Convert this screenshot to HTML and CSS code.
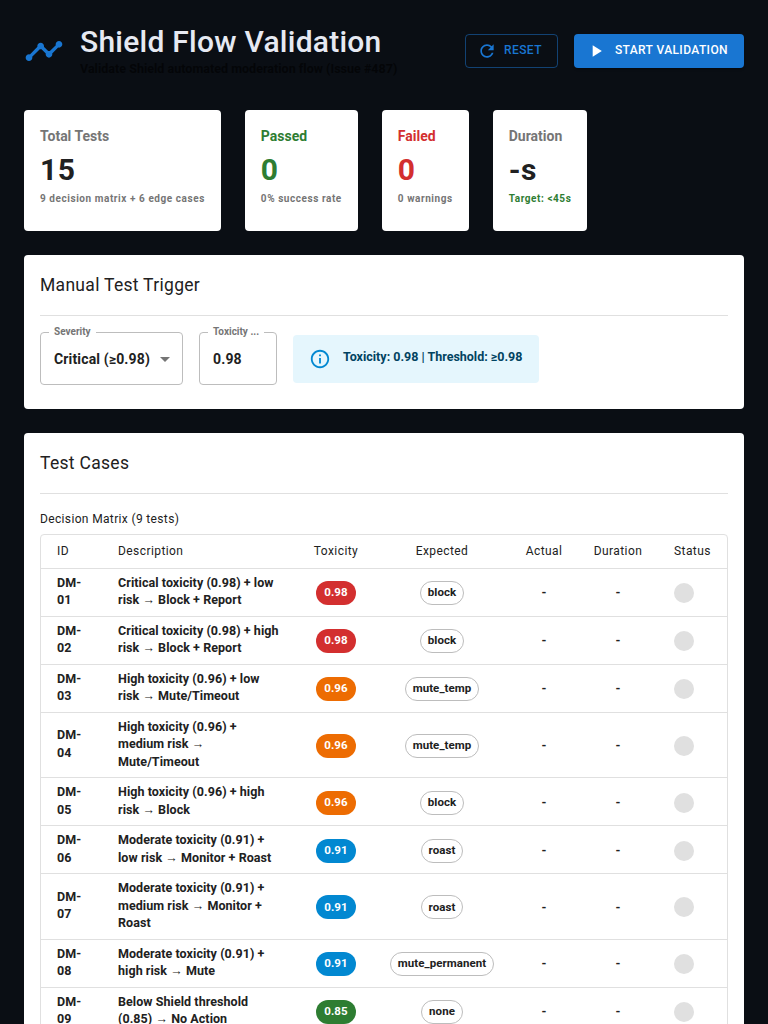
FILE: index.html
```html
<!DOCTYPE html>
<html lang="en">
<head>
  <meta charset="UTF-8" />
  <title>Shield Flow Validation</title>
  <link rel="stylesheet" href="styles.css">
</head>
<body>
  <div class="page">

    <header class="header">
      <div class="brand">
        <svg class="brand-icon" viewBox="0 0 24 24"><path d="M23 8c0 1.1-.9 2-2 2-.18 0-.35-.02-.51-.07l-3.56 3.55c.05.16.07.34.07.52 0 1.1-.9 2-2 2s-2-.9-2-2c0-.18.02-.36.07-.52l-2.55-2.55c-.16.05-.34.07-.52.07s-.36-.02-.52-.07l-4.55 4.56c.05.16.07.33.07.51 0 1.1-.9 2-2 2s-2-.9-2-2 .9-2 2-2c.18 0 .35.02.51.07l4.56-4.55C8.02 9.36 8 9.18 8 9c0-1.1.9-2 2-2s2 .9 2 2c0 .18-.02.36-.07.52l2.55 2.55c.16-.05.34-.07.52-.07s.36.02.52.07l3.55-3.56C19.02 8.35 19 8.18 19 8c0-1.1.9-2 2-2s2 .9 2 2z"/></svg>
        <div>
          <h1>Shield Flow Validation</h1>
          <p class="subtitle">Validate Shield automated moderation flow (Issue #487)</p>
        </div>
      </div>
      <div class="actions">
        <button class="btn btn-outline">
          <svg viewBox="0 0 24 24"><path d="M17.65 6.35C16.2 4.9 14.21 4 12 4c-4.42 0-7.99 3.58-7.99 8s3.57 8 7.99 8c3.73 0 6.84-2.55 7.73-6h-2.08c-.82 2.33-3.04 4-5.65 4-3.31 0-6-2.69-6-6s2.69-6 6-6c1.66 0 3.14.69 4.22 1.78L13 11h7V4l-2.35 2.35z"/></svg>
          <span>Reset</span>
        </button>
        <button class="btn btn-primary">
          <svg viewBox="0 0 24 24"><path d="M8 5v14l11-7z"/></svg>
          <span>Start Validation</span>
        </button>
      </div>
    </header>

    <section class="stats">
      <div class="stat">
        <div class="stat-title">Total Tests</div>
        <div class="stat-value">15</div>
        <div class="stat-note">9 decision matrix + 6 edge cases</div>
      </div>
      <div class="stat">
        <div class="stat-title green">Passed</div>
        <div class="stat-value green">0</div>
        <div class="stat-note">0% success rate</div>
      </div>
      <div class="stat">
        <div class="stat-title red">Failed</div>
        <div class="stat-value red">0</div>
        <div class="stat-note">0 warnings</div>
      </div>
      <div class="stat">
        <div class="stat-title">Duration</div>
        <div class="stat-value">-s</div>
        <div class="stat-note green">Target: &lt;45s</div>
      </div>
    </section>

    <section class="card">
      <h2>Manual Test Trigger</h2>
      <hr>
      <div class="trigger">
        <div class="field field-select">
          <span class="field-label">Severity</span>
          <span class="field-value">Critical (≥0.98)</span>
          <span class="caret"></span>
        </div>
        <div class="field field-input">
          <span class="field-label">Toxicity ...</span>
          <span class="field-value">0.98</span>
        </div>
        <div class="alert">
          <svg viewBox="0 0 24 24"><path d="M11 7h2v2h-2zm0 4h2v6h-2zm1-9C6.48 2 2 6.48 2 12s4.48 10 10 10 10-4.48 10-10S17.52 2 12 2zm0 18c-4.41 0-8-3.59-8-8s3.59-8 8-8 8 3.59 8 8-3.59 8-8 8z"/></svg>
          <span>Toxicity: 0.98 | Threshold: ≥0.98</span>
        </div>
      </div>
    </section>

    <section class="card">
      <h2>Test Cases</h2>
      <hr>
      <div class="table-title">Decision Matrix (9 tests)</div>
      <div class="table-wrap">
        <table>
          <colgroup>
            <col class="c-id"><col class="c-desc"><col class="c-tox"><col class="c-exp"><col class="c-act"><col class="c-dur"><col class="c-status">
          </colgroup>
          <thead>
            <tr>
              <th>ID</th><th>Description</th><th class="mid">Toxicity</th><th class="mid">Expected</th><th class="mid">Actual</th><th class="mid">Duration</th><th>Status</th>
            </tr>
          </thead>
          <tbody>
            <tr><td>DM-01</td><td>Critical toxicity (0.98) + low risk → Block + Report</td><td class="mid"><span class="score critical">0.98</span></td><td class="mid"><span class="chip">block</span></td><td class="mid">-</td><td class="mid">-</td><td class="status"><span class="dot"></span></td></tr>
            <tr><td>DM-02</td><td>Critical toxicity (0.98) + high risk → Block + Report</td><td class="mid"><span class="score critical">0.98</span></td><td class="mid"><span class="chip">block</span></td><td class="mid">-</td><td class="mid">-</td><td class="status"><span class="dot"></span></td></tr>
            <tr><td>DM-03</td><td>High toxicity (0.96) + low risk → Mute/Timeout</td><td class="mid"><span class="score high">0.96</span></td><td class="mid"><span class="chip">mute_temp</span></td><td class="mid">-</td><td class="mid">-</td><td class="status"><span class="dot"></span></td></tr>
            <tr><td>DM-04</td><td>High toxicity (0.96) + medium risk → Mute/Timeout</td><td class="mid"><span class="score high">0.96</span></td><td class="mid"><span class="chip">mute_temp</span></td><td class="mid">-</td><td class="mid">-</td><td class="status"><span class="dot"></span></td></tr>
            <tr><td>DM-05</td><td>High toxicity (0.96) + high risk → Block</td><td class="mid"><span class="score high">0.96</span></td><td class="mid"><span class="chip">block</span></td><td class="mid">-</td><td class="mid">-</td><td class="status"><span class="dot"></span></td></tr>
            <tr><td>DM-06</td><td>Moderate toxicity (0.91) + low risk → Monitor + Roast</td><td class="mid"><span class="score moderate">0.91</span></td><td class="mid"><span class="chip">roast</span></td><td class="mid">-</td><td class="mid">-</td><td class="status"><span class="dot"></span></td></tr>
            <tr><td>DM-07</td><td>Moderate toxicity (0.91) + medium risk → Monitor + Roast</td><td class="mid"><span class="score moderate">0.91</span></td><td class="mid"><span class="chip">roast</span></td><td class="mid">-</td><td class="mid">-</td><td class="status"><span class="dot"></span></td></tr>
            <tr><td>DM-08</td><td>Moderate toxicity (0.91) + high risk → Mute</td><td class="mid"><span class="score moderate">0.91</span></td><td class="mid"><span class="chip">mute_permanent</span></td><td class="mid">-</td><td class="mid">-</td><td class="status"><span class="dot"></span></td></tr>
            <tr><td>DM-09</td><td>Below Shield threshold (0.85) → No Action</td><td class="mid"><span class="score low">0.85</span></td><td class="mid"><span class="chip">none</span></td><td class="mid">-</td><td class="mid">-</td><td class="status"><span class="dot"></span></td></tr>
          </tbody>
        </table>
      </div>
    </section>

  </div>
</body>
</html>
```

FILE: styles.css
```css
:root {
  --bg: #0a0e14;
  --primary: #1976d2;
  --green: #2e7d32;
  --red: #d32f2f;
  --orange: #ed6c02;
  --blue: #0288d1;
  --text: #212121;
  --muted: #757575;
  --line: #e0e0e0;
}

* {
  box-sizing: border-box;
}

html, body {
  height: 1024px;
  overflow: hidden;
}

body {
  margin: 0;
  background: var(--bg);
  color: var(--text);
  font-family: Roboto, "Liberation Sans", sans-serif;
}

.page {
  padding: 24px;
}

/* header */
.header {
  display: flex;
  justify-content: space-between;
  align-items: flex-start;
  height: 62px;
  margin-bottom: 24px;
}

.brand {
  display: flex;
  align-items: center;
  gap: 16px;
}

.brand-icon {
  width: 40px;
  height: 40px;
  fill: var(--primary);
}

h1 {
  margin: 0;
  color: #e6e9f2;
  font-size: 30px;
  font-weight: 500;
  line-height: 36px;
  letter-spacing: 0.25px;
}

.subtitle {
  margin: 0;
  color: rgba(0, 0, 0, 0.6);
  font-size: 12.5px;
  font-weight: 700;
  line-height: 18px;
  letter-spacing: 0.02px;
}

.actions {
  display: flex;
  gap: 16px;
  margin-top: 10px;
}

.btn {
  display: flex;
  align-items: center;
  height: 34px;
  padding: 0 15px 0 11px;
  border-radius: 4px;
  border: 1px solid transparent;
  font-family: inherit;
  font-size: 12px;
  font-weight: 500;
  letter-spacing: 0.4px;
  text-transform: uppercase;
}

.btn span {
  margin-top: -2px;
}

.btn svg {
  width: 20px;
  height: 20px;
  fill: currentColor;
}

.btn-outline {
  gap: 7px;
  background: transparent;
  border-color: rgba(25, 118, 210, 0.5);
  color: var(--primary);
}

.btn-primary {
  gap: 9px;
  background: var(--primary);
  color: #fff;
  box-shadow: 0 3px 1px -2px rgba(0,0,0,0.2), 0 2px 2px rgba(0,0,0,0.14);
}

/* stats */
.stats {
  display: flex;
  gap: 24px;
  margin-bottom: 24px;
}

.stat {
  height: 121px;
  padding: 16px;
  background: #fff;
  border-radius: 4px;
}

.stat-title {
  color: var(--muted);
  font-size: 14px;
  font-weight: 700;
  line-height: 20px;
}

.stat-value {
  margin-top: 5px;
  font-size: 30px;
  font-weight: 700;
  line-height: 38px;
  letter-spacing: 0.5px;
}

.stat-note {
  margin-top: 2px;
  color: var(--muted);
  font-size: 10px;
  font-weight: 700;
  line-height: 16px;
  letter-spacing: 0.56px;
}

.stat-title.green, .stat-value.green, .stat-note.green {
  color: var(--green);
}

.stat-title.red, .stat-value.red {
  color: var(--red);
}

/* cards */
.card {
  margin-bottom: 24px;
  padding: 16px;
  background: #fff;
  border-radius: 4px;
}

h2 {
  margin: 0;
  padding-top: 2px;
  font-size: 17.5px;
  font-weight: 400;
  line-height: 24px;
  letter-spacing: 0.3px;
}

hr {
  margin: 18px 0 16px;
  border: 0;
  border-top: 1px solid var(--line);
}

/* manual trigger */
.trigger {
  display: flex;
  align-items: center;
  gap: 16px;
  margin-bottom: 8px;
}

.field {
  position: relative;
  display: flex;
  align-items: center;
  height: 53px;
  padding: 0 13px;
  border: 1px solid #bdbdbd;
  border-radius: 4px;
  font-size: 14px;
  font-weight: 700;
}

.field-select {
  width: 143px;
}

.field-input {
  width: 78px;
}

.field-label {
  position: absolute;
  top: -7px;
  left: 8px;
  padding: 0 5px;
  background: #fff;
  color: var(--muted);
  font-size: 10px;
  font-weight: 700;
  line-height: 12px;
  white-space: nowrap;
}

.field-value {
  white-space: nowrap;
  letter-spacing: 0.15px;
}

.caret {
  position: absolute;
  top: 24px;
  right: 12px;
  border-left: 5px solid transparent;
  border-right: 5px solid transparent;
  border-top: 5px solid var(--muted);
}

.alert {
  display: flex;
  align-items: center;
  gap: 12px;
  width: 246px;
  height: 48px;
  padding: 0 16px;
  background: #e5f6fd;
  border-radius: 4px;
  color: #014361;
  font-size: 12.5px;
  font-weight: 700;
  white-space: nowrap;
}

.alert span {
  margin-top: -5px;
}

.alert svg {
  width: 22px;
  height: 22px;
  flex: none;
  fill: var(--blue);
}

/* table */
.table-title {
  margin-bottom: 6px;
  font-size: 12px;
  font-weight: 400;
  line-height: 18px;
  letter-spacing: 0.35px;
}

.table-wrap {
  border: 1px solid var(--line);
  border-radius: 4px;
}

table {
  width: 100%;
  table-layout: fixed;
  border-collapse: collapse;
}

.c-id { width: 61px; }
.c-desc { width: 196px; }
.c-tox { width: 76px; }
.c-exp { width: 136px; }
.c-act { width: 68px; }
.c-dur { width: 80px; }

th, td {
  padding: 5px 16px 7px;
  text-align: left;
  border-bottom: 1px solid var(--line);
  font-size: 12.5px;
  line-height: 17.5px;
}

th {
  height: 33px;
  padding: 6px 16px;
  font-size: 12px;
  font-weight: 400;
  letter-spacing: 0.42px;
}

td {
  font-weight: 700;
  letter-spacing: 0.06px;
}

tr:last-child td {
  border-bottom: 0;
}

td.mid, td.status {
  padding-top: 7px;
  padding-bottom: 5px;
}

.mid {
  padding-left: 0;
  padding-right: 0;
  text-align: center;
}

.score, .chip {
  display: inline-flex;
  align-items: center;
  height: 24px;
  padding: 0 7px;
  border-radius: 12px;
  font-size: 11.5px;
  font-weight: 700;
  vertical-align: middle;
}

.score {
  padding: 0 8px;
  color: #fff;
}

.score.critical { background: var(--red); }
.score.high { background: var(--orange); }
.score.moderate { background: var(--blue); }
.score.low { background: var(--green); }

.chip {
  border: 1px solid #bdbdbd;
}

.dot {
  display: block;
  width: 20px;
  height: 20px;
  border-radius: 50%;
  background: var(--line);
}
```
